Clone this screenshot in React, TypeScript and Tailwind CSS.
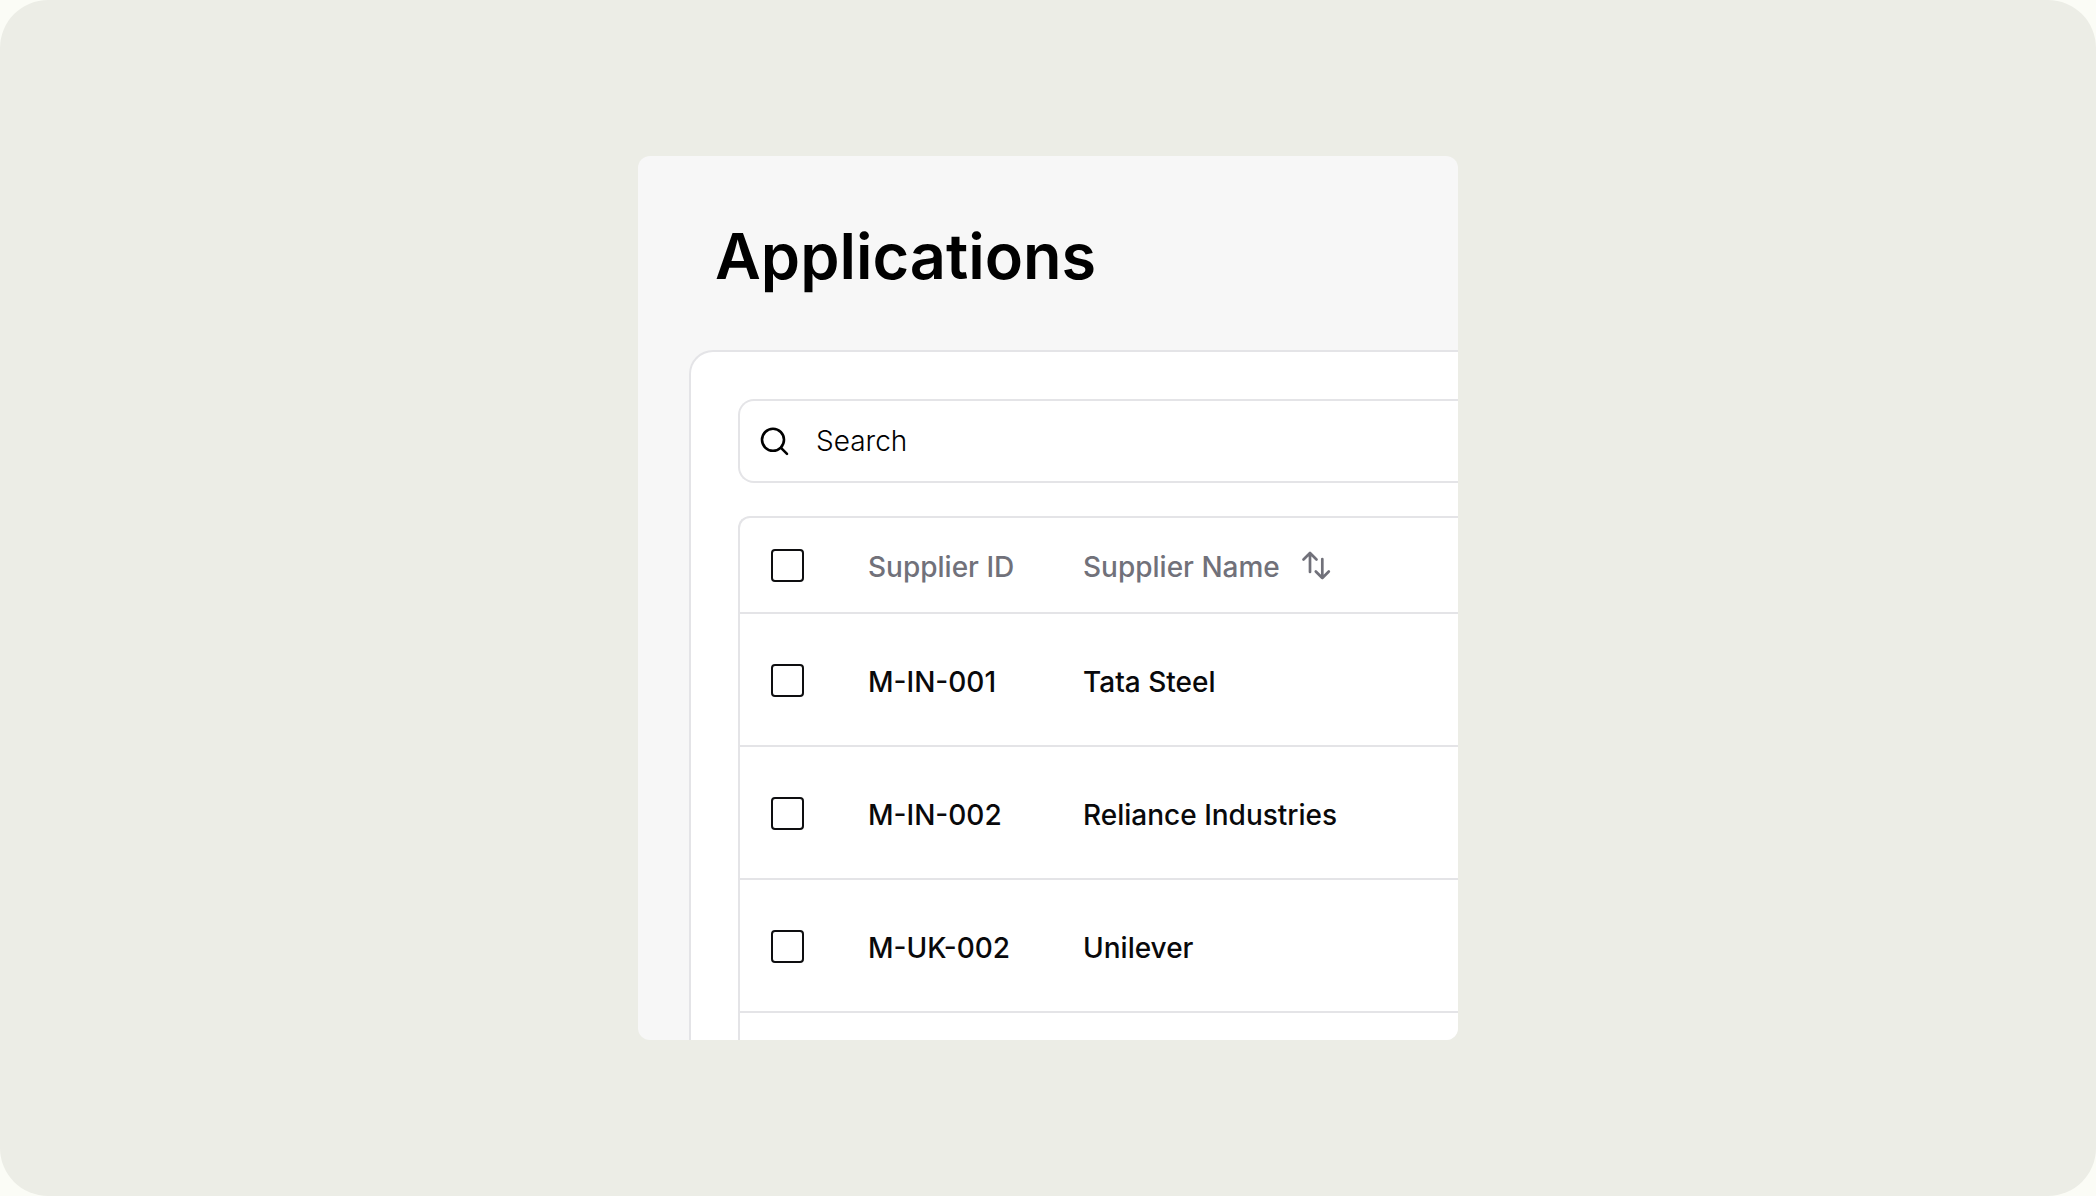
import React, { useState } from 'react';

interface Supplier {
  id: string;
  name: string;
}

const suppliers: Supplier[] = [
  { id: 'M-IN-001', name: 'Tata Steel' },
  { id: 'M-IN-002', name: 'Reliance Industries' },
  { id: 'M-UK-002', name: 'Unilever' },
];

const SearchIcon = () => (
  <svg className="h-8 w-8 shrink-0" viewBox="0 0 32 32" fill="none" stroke="currentColor" strokeWidth="2.6" strokeLinecap="round" aria-hidden="true">
    <circle cx="15" cy="14.8" r="11" />
    <path d="M23 22.8L29 28.8" />
  </svg>
);

const SortIcon = () => (
  <svg className="h-8 w-8" viewBox="0 0 32 32" fill="none" stroke="currentColor" strokeWidth="2.7" strokeLinecap="round" strokeLinejoin="round" aria-hidden="true">
    <path d="M10 23V4M3.5 10.5L10 4L16.5 10.5" />
    <path d="M22.3 10V29M15.8 22.5L22.3 29L28.8 22.5" />
  </svg>
);

interface CheckboxProps {
  label: string;
  checked: boolean;
  onChange: () => void;
}

const Checkbox = ({ label, checked, onChange }: CheckboxProps) => (
  <input
    type="checkbox"
    aria-label={label}
    checked={checked}
    onChange={onChange}
    className="block h-[33px] w-[33px] appearance-none rounded-[4px] border-2 border-[#0e0e10] bg-white checked:bg-[#0e0e10]"
  />
);

const App = () => {
  const [query, setQuery] = useState('');
  const [selected, setSelected] = useState<string[]>([]);
  const [ascending, setAscending] = useState<boolean | null>(null);

  const toggle = (id: string) => {
    setSelected(prev => (prev.includes(id) ? prev.filter(item => item !== id) : [...prev, id]));
  };

  const allSelected = selected.length === suppliers.length;

  const rows = suppliers.filter(s => s.name.toLowerCase().includes(query.toLowerCase()));
  if (ascending !== null) {
    rows.sort((a, b) => (ascending ? 1 : -1) * a.name.localeCompare(b.name));
  }

  return (
    <div className="bg-[#fbfcf6]">
      <main className="flex min-h-screen items-center justify-center rounded-[48px] bg-[#ecede6]">
        <div className="w-full max-w-[820px] overflow-hidden rounded-xl bg-[#f7f7f7] pl-[51px]">
          <h1 className="pt-16 pb-[58px] pl-[26px] font-[Inter,sans-serif] text-[63px] leading-[72px] font-semibold text-black">
            Applications
          </h1>

          <div className="rounded-tl-3xl border-t-2 border-l-2 border-[#e4e4e7] bg-white pt-[47px] pl-[47px]">
            <label className="flex h-[84px] items-center gap-[26px] rounded-l-2xl border-2 border-r-0 border-[#e4e4e7] pl-[18px] text-black">
              <SearchIcon />
              <input
                type="text"
                placeholder="Search"
                aria-label="Search"
                value={query}
                onChange={e => setQuery(e.target.value)}
                className="min-w-0 flex-1 bg-transparent font-[Inter,sans-serif] text-[28px] leading-9 font-light outline-none placeholder:text-black"
              />
            </label>

            <div className="mt-[33px] rounded-tl-xl border-t-2 border-l-2 border-[#e4e4e7]">
              <table className="w-full table-fixed border-separate border-spacing-0 text-left font-[Inter,sans-serif] text-[28px] leading-9 font-medium text-[#09090b]">
                <thead className="text-[#71717a]">
                  <tr>
                    <th className="h-24 w-32 border-b-2 border-[#e4e4e7] pl-[31px]">
                      <Checkbox
                        label="Select all suppliers"
                        checked={allSelected}
                        onChange={() => setSelected(allSelected ? [] : suppliers.map(s => s.id))}
                      />
                    </th>
                    <th className="w-[215px] border-b-2 border-[#e4e4e7] pt-1 font-medium">Supplier ID</th>
                    <th className="border-b-2 border-[#e4e4e7] font-medium">
                      <button type="button" className="flex items-center gap-5" onClick={() => setAscending(prev => !prev)}>
                        <span className="pt-1">Supplier Name</span>
                        <SortIcon />
                      </button>
                    </th>
                  </tr>
                </thead>
                <tbody>
                  {rows.map(supplier => (
                    <tr key={supplier.id}>
                      <td className="h-[133px] border-b-2 border-[#e4e4e7] pt-0.5 pl-[31px]">
                        <Checkbox
                          label={`Select ${supplier.name}`}
                          checked={selected.includes(supplier.id)}
                          onChange={() => toggle(supplier.id)}
                        />
                      </td>
                      <td className="border-b-2 border-[#e4e4e7] pt-1">{supplier.id}</td>
                      <td className="border-b-2 border-[#e4e4e7] pt-1">{supplier.name}</td>
                    </tr>
                  ))}
                </tbody>
              </table>
              <div className="h-[27px]" />
            </div>
          </div>
        </div>
      </main>
    </div>
  );
};

export default App;
